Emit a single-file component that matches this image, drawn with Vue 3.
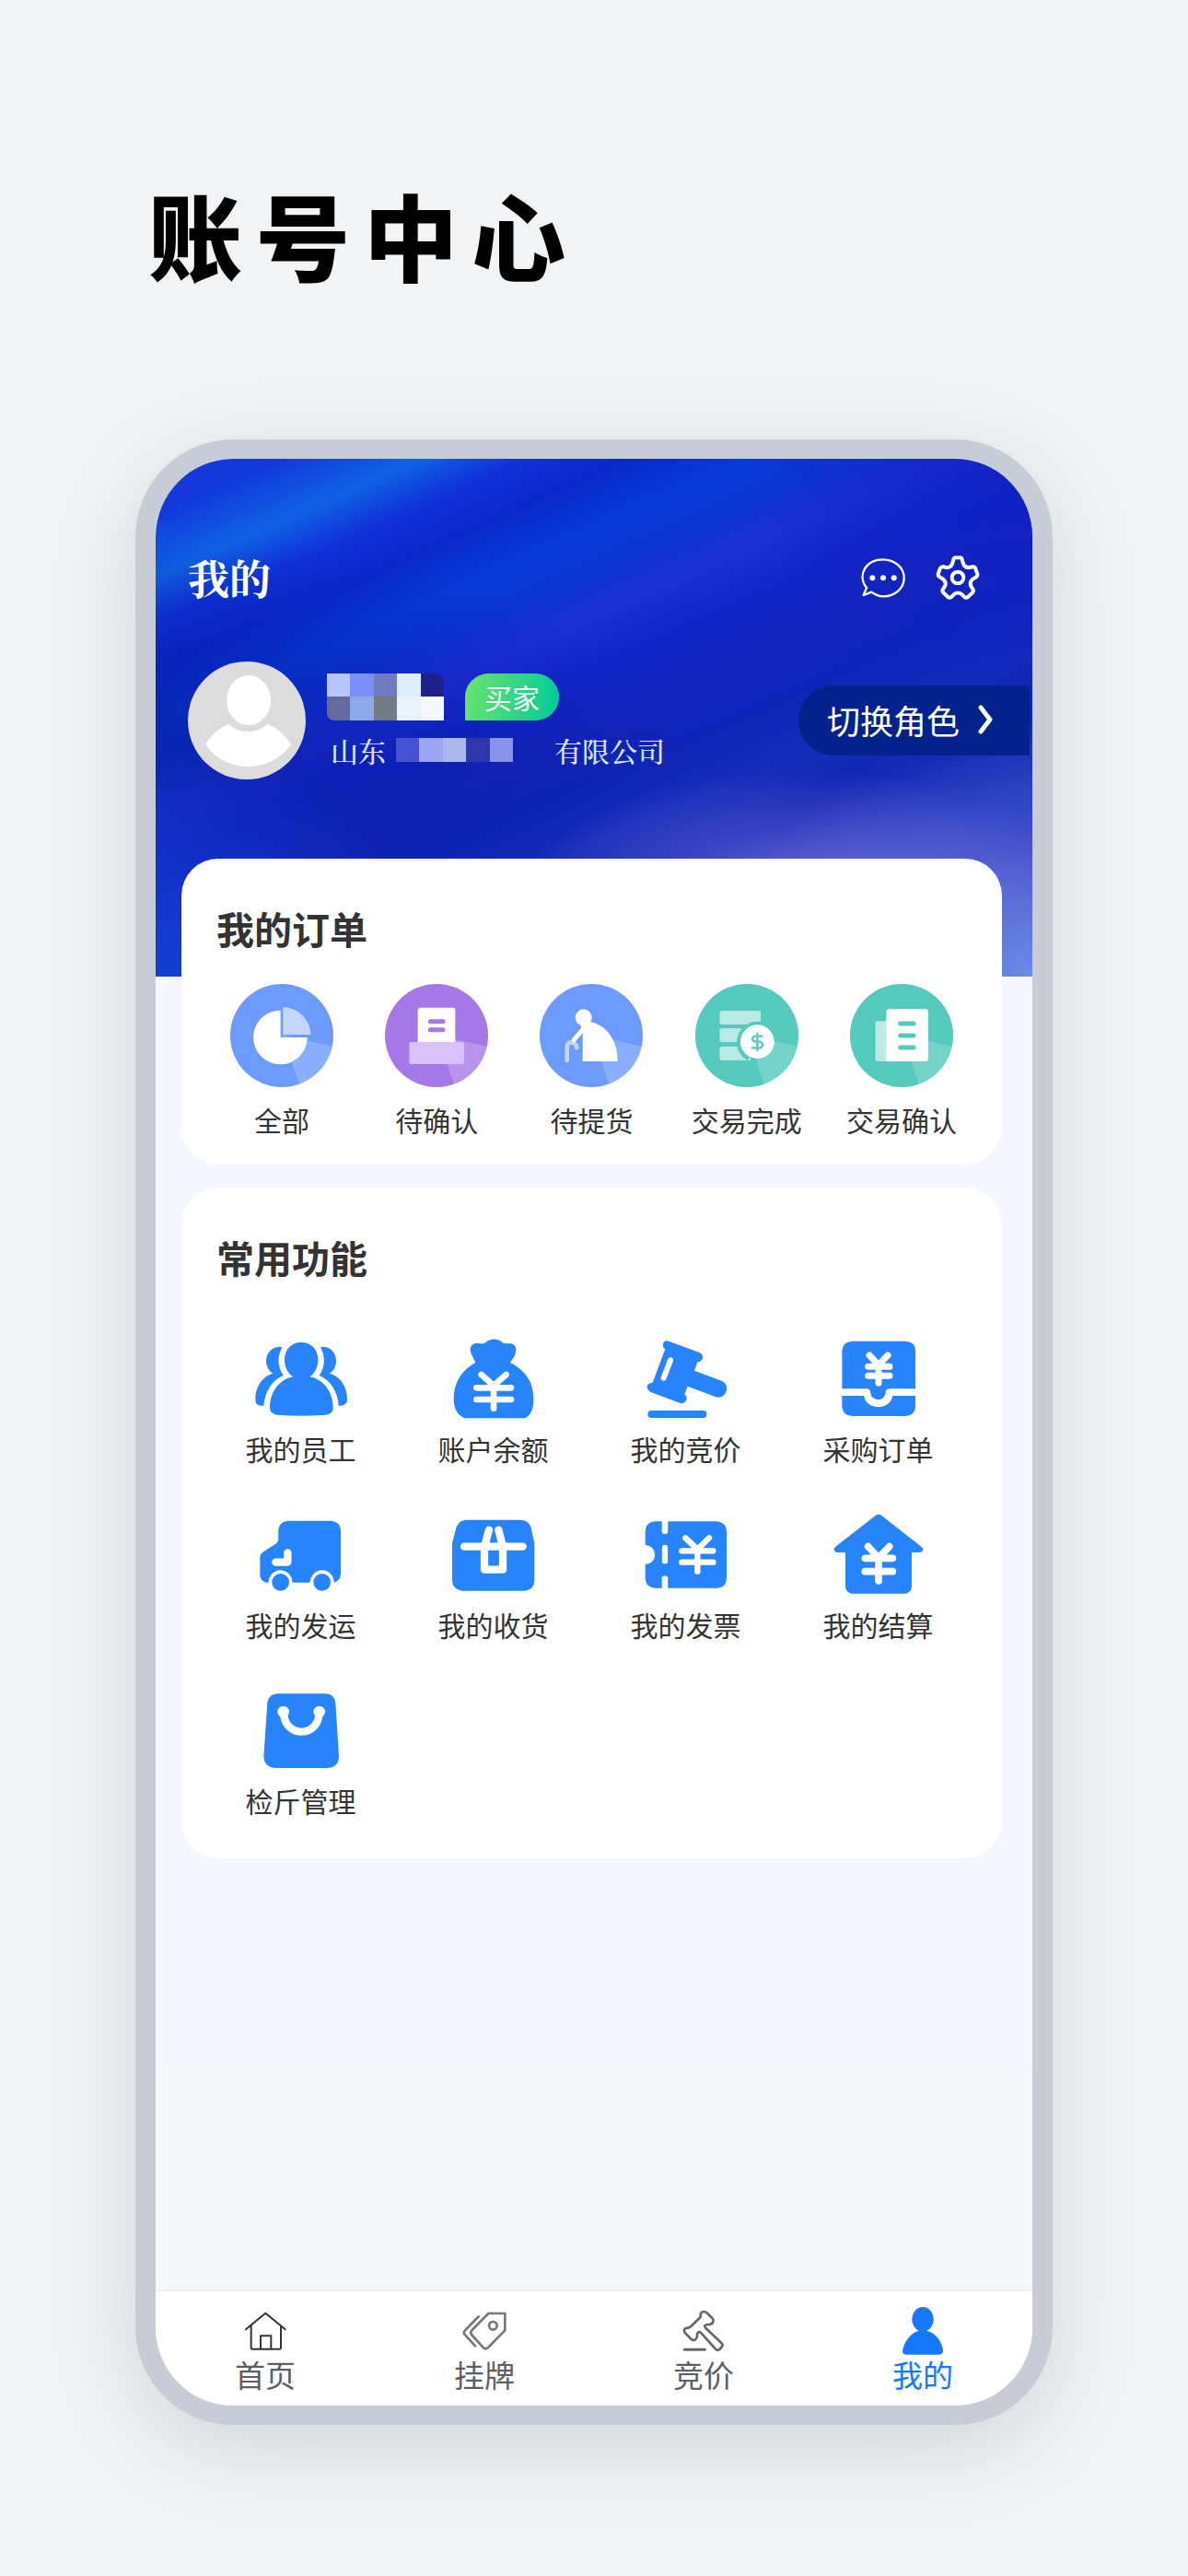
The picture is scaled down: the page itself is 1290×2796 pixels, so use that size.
<template>
  <div class="page">
    <h1 class="page-title">账号中心</h1>

    <div class="phone">
      <main class="content">
        <!-- Header -->
        <header class="hero">
          <div class="topbar">
            <h2 class="topbar-title">我的</h2>
            <button class="icon-btn" type="button" aria-label="消息">
              <svg viewBox="283 65 144 144" fill="none" stroke="#fff" stroke-width="7" stroke-linejoin="round">
                <path d="M291 194L301 170C285 150 284 126 296 106C309 85 333 78 355 78C393 78 423 105 423 138C423 172 393 198 355 198C341 198 328 191 317 184Z" />
                <g fill="#fff" stroke="none">
                  <circle cx="320" cy="138" r="9" />
                  <circle cx="355" cy="138" r="9" />
                  <circle cx="390" cy="138" r="9" />
                </g>
              </svg>
            </button>
            <button class="icon-btn" type="button" aria-label="设置">
              <svg viewBox="527 65 144 144" fill="none" stroke="#fff" stroke-width="12" stroke-linejoin="round">
                <path d="M592 72H606Q612 72 613 78L617 92Q622 105 636 104L648 101Q654 101 656 106L663 125Q664 131 660 134L649 141Q637 149 641 163L649 176Q651 182 647 186L631 201Q626 204 621 200L613 192Q599 181 586 192L578 200Q573 204 568 201L552 186Q548 182 550 176L558 163Q562 149 550 141L539 134Q534 131 535 125L542 106Q545 101 551 101L562 104Q577 105 581 92L585 78Q586 72 592 72Z" />
                <circle cx="599" cy="137" r="19" />
              </svg>
            </button>
          </div>

          <div class="user">
            <svg class="avatar" viewBox="0 0 128 128">
              <circle cx="64" cy="64" r="64" fill="#dcdcdc" />
              <ellipse cx="66" cy="42" rx="24" ry="27" fill="#fff" />
              <path d="M19 90C26 79 35 71 45 68C54 79 76 79 86 68C96 71 106 80 112 90C101 106 83 114 65 114C47 114 30 106 19 90Z" fill="#fff" />
            </svg>
            <div class="user-info">
              <div class="name-row">
                <div class="mosaic">
                  <span v-for="(c, i) in nameMosaic" :key="i" :style="{ background: c }"></span>
                </div>
                <span class="badge">买家</span>
              </div>
              <p class="company">
                <span>山东</span>
                <span class="mosaic company-mosaic">
                  <span v-for="(c, i) in companyMosaic" :key="i" :style="{ background: c }"></span>
                </span>
                <span>有限公司</span>
              </p>
            </div>
            <button class="switch-role" type="button">
              切换角色
              <svg viewBox="0 0 16 32" fill="none" stroke="#fff" stroke-width="5" stroke-linecap="round" stroke-linejoin="round">
                <path d="M3 3L13 16L3 29" />
              </svg>
            </button>
          </div>
        </header>

        <!-- Orders -->
        <section class="card orders">
          <h3 class="card-title">我的订单</h3>
          <div class="order-list">
            <a v-for="item in orders" :key="item.label" class="item" href="#">
              <svg class="order-icon" viewBox="0 0 336 336">
                <circle cx="168" cy="168" r="168" :fill="item.color" />
                <path d="M170 166L332 203A168 168 0 0 1 225 327Z" fill="#fff" opacity="0.2" />
                <path
                  v-for="(s, i) in item.shapes"
                  :key="i"
                  :d="s.d"
                  :fill="s.stroke ? 'none' : s.fill"
                  :stroke="s.stroke"
                  :stroke-width="s.width"
                  stroke-linecap="round"
                  stroke-linejoin="round"
                />
              </svg>
              <span class="label order-label">{{ item.label }}</span>
            </a>
          </div>
        </section>

        <!-- Common functions -->
        <section class="card functions">
          <h3 class="card-title">常用功能</h3>
          <div class="function-list">
            <a v-for="item in functions" :key="item.label" class="item" href="#">
              <svg class="function-icon" :viewBox="item.box">
                <path v-for="d in item.solid" :key="d" :d="d" fill="#2684ff" />
                <path v-if="item.base" :d="item.base" class="line" stroke="#2684ff" stroke-width="24" />
                <path v-if="item.dots" :d="item.dots" fill="#fff" />
                <path v-if="item.line" :d="item.line" class="line" stroke="#fff" :stroke-width="item.width" />
              </svg>
              <span class="label">{{ item.label }}</span>
            </a>
          </div>
        </section>
      </main>

      <!-- Tab bar -->
      <nav class="tabbar">
        <a class="tab" href="#">
          <svg viewBox="353 126 168 168" fill="none" stroke="#333" stroke-width="6" stroke-linecap="round" stroke-linejoin="round">
            <path d="M374 205L438 152L502 205M391 193V264Q391 269 396 269H483Q488 269 488 264V193M422 268V226H456V268" />
          </svg>
          首页
        </a>
        <a class="tab" href="#">
          <svg viewBox="1071 126 168 168" fill="none" stroke="#777" stroke-width="8" stroke-linecap="round" stroke-linejoin="round">
            <path d="M1168 153H1222V208L1166 265Q1159 271 1152 265L1113 222Q1108 215 1113 209ZM1136 163L1092 208Q1085 216 1092 223L1125 259" />
            <circle cx="1183" cy="193" r="13" />
          </svg>
          挂牌
        </a>
        <a class="tab" href="#">
          <svg viewBox="256 126 168 168" fill="none" stroke="#666" stroke-width="8" stroke-linecap="round" stroke-linejoin="round">
            <path d="M330 163C329 152 334 147 341 147Q346 147 350 151L368 168C375 176 371 188 358 189C344 188 341 194 347 201L398 249Q404 255 400 261L392 270Q386 275 380 270L333 218C326 210 318 214 319 224C320 238 309 244 300 237L281 218C273 208 277 200 289 200Q295 199 299 195L326 169Q330 166 330 163Z" />
            <path d="M278 271H344" stroke-width="9" />
          </svg>
          竞价
        </a>
        <a class="tab active" href="#" aria-current="page">
          <svg viewBox="972 126 168 168" fill="#1677ff">
            <ellipse cx="1056" cy="172" rx="35" ry="40" />
            <path d="M990 275C998 235 1025 212 1045 209H1067C1090 213 1115 235 1122 272Q1123 284 1112 287H1000Q990 285 990 275Z" />
          </svg>
          我的
        </a>
      </nav>
    </div>
  </div>
</template>

<script setup>
const nameMosaic = [
  "#bac4ff", "#7b8ff8", "#6f7dbe", "#deeeff", "#1f2088",
  "#66699e", "#8da8ec", "#727b82", "#e8f3ff", "#f5f7ff"
];
const companyMosaic = ["#4653d0", "#9ca5f6", "#abb7ea", "#2c38ac", "#8793e8"];

const orders = [
  {
    label: "全部",
    color: "#6c9aff",
    shapes: [
      { d: "M164 86A88 88 0 1 0 251 174H164Z", fill: "#fff" },
      { d: "M172 76A90 90 0 0 1 262 165H172Z", fill: "#c4d6fd" }
    ]
  },
  {
    label: "待确认",
    color: "#a678e7",
    shapes: [
      { d: "M115 77H221Q229 77 229 85V192H107V85Q107 77 115 77Z", fill: "#fff" },
      { d: "M148 122H189M148 149H189", stroke: "#a678e7", width: 15 },
      { d: "M86 189H251Q258 189 258 196V254Q258 261 251 261H86Q79 261 79 254V196Q79 189 86 189Z", fill: "#d9c0f9" }
    ]
  },
  {
    label: "待提货",
    color: "#6c9aff",
    shapes: [
      { d: "M89 249V206Q89 190 104 190Q118 191 121 208", stroke: "#c4d6fd", width: 14 },
      { d: "M116 109A27 27 0 1 1 170 109A27 27 0 1 1 116 109Z", fill: "#fff" },
      { d: "M146 142L112 181", stroke: "#fff", width: 15 },
      { d: "M130 130L166 124C222 134 255 192 254 252H140V150Z", fill: "#fff" }
    ]
  },
  {
    label: "交易完成",
    color: "#53cabd",
    shapes: [
      { d: "M87 87H205Q213 87 213 95V132H87Q79 132 79 124V95Q79 87 87 87ZM87 144H160V189H87Q79 189 79 181V152Q79 144 87 144ZM87 204H180V249H87Q79 249 79 241V212Q79 204 87 204Z", fill: "#bae9e3" },
      { d: "M135 188A67 67 0 0 1 213 123V188L170 249A67 67 0 0 1 135 188Z", fill: "#53cabd" },
      { d: "M147 188A55 55 0 1 1 257 188A55 55 0 1 1 147 188Z", fill: "#fff" },
      { d: "M217 170H195A9 9 0 0 0 195 188H209A10 10 0 0 1 209 208H185M202 161V216", stroke: "#53cabd", width: 7 }
    ]
  },
  {
    label: "交易确认",
    color: "#53cabd",
    shapes: [
      { d: "M90 121H130V252H90Q82 252 82 244V129Q82 121 90 121Z", fill: "#bae9e3" },
      { d: "M126 82H247Q255 82 255 90V244Q255 252 247 252H118V90Q118 82 126 82Z", fill: "#fff" },
      { d: "M164 129H207M164 168H207M164 207H207", stroke: "#53cabd", width: 15 }
    ]
  }
];

const functions = [
  {
    label: "我的员工",
    box: "254 495 312 312",
    solid: [
      "M356 588C356 553 380 531 410 531C441 531 465 553 465 588C465 612 454 632 439 643C485 652 514 695 514 745Q514 765 490 767Q410 773 332 767Q308 765 308 745C308 695 337 652 383 643C367 632 356 612 356 588Z",
      "M348 547C320 540 296 562 296 592C296 610 306 626 319 632C285 640 261 675 261 715Q259 737 280 737H288C292 690 315 655 352 638C332 612 332 575 348 547Z",
      "M473 547C501 540 524 562 524 592C524 610 515 626 502 632C536 640 560 675 560 715Q562 735 541 737H532C529 690 506 655 469 638C489 612 489 575 473 547Z"
    ]
  },
  {
    label: "账户余额",
    box: "880 495 312 312",
    solid: [
      "M977 597L963 568C954 545 966 533 985 534C995 535 1003 537 1010 532C1026 517 1048 517 1065 532C1072 537 1082 533 1092 535C1108 539 1111 552 1108 562C1105 575 1098 587 1090 597C1145 625 1166 665 1166 715C1166 748 1158 768 1138 778H943C916 768 906 745 906 715C906 660 935 620 977 597Z"
    ],
    line: "M996 636L1036 672L1077 636M980 679H1093M980 717H1093M1036 672V746",
    width: 20
  },
  {
    label: "我的竞价",
    box: "157 45 312 312",
    solid: [
      "M256 77L358 115Q370 122 366 134Q361 145 350 145L340 173L430 207Q450 217 444 240Q434 265 410 259L318 224L308 250Q318 258 314 268Q308 282 294 279L196 242Q182 232 187 221Q191 213 204 212L245 103Q235 97 238 86Q243 73 256 77Z"
    ],
    base: "M200 315H368",
    line: "M262 139L240 197",
    width: 18
  },
  {
    label: "采购订单",
    box: "782 45 312 312",
    solid: [
      "M852 77H1026Q1058 79 1058 109V232H972Q961 233 961 245Q956 267 937 268Q914 266 912 247Q911 233 902 232H819V109Q821 79 852 77Z",
      "M819 255H890Q898 290 937 292Q976 290 984 255H1058V290Q1056 319 1026 321H852Q821 319 819 290Z"
    ],
    line: "M908 123L938 155L968 123M904 160H974M904 190H974M938 155V214",
    width: 21
  },
  {
    label: "我的发运",
    box: "134 48 312 312",
    solid: [
      "M247 92H388Q417 94 419 124V265Q418 287 398 293C394 265 378 253 358 253C338 253 322 268 318 293H262C260 268 242 253 223 253C200 253 186 270 183 293H178Q158 290 156 270V210Q157 200 165 194L206 168Q216 162 216 150V124Q217 95 247 92Z",
      "M195 292A28 28 0 1 1 251 292A28 28 0 1 1 195 292Z",
      "M330 292A28 28 0 1 1 386 292A28 28 0 1 1 330 292Z"
    ],
    line: "M246 196V227H207",
    width: 25
  },
  {
    label: "我的收货",
    box: "762 48 312 312",
    solid: [
      "M828 89H1008Q1032 91 1039 112L1051 165V288Q1050 315 1022 320H815Q785 316 783 288V165L797 112Q805 91 828 89Z"
    ],
    line: "M822 176H1013M903 122L888 176V251H948V176L934 122",
    width: 25
  },
  {
    label: "我的发票",
    box: "157 618 312 312",
    solid: [
      "M212 664H234V695A10 10 0 0 0 254 695V664H414Q444 668 445 697V850Q444 880 414 881H254V851A10 10 0 0 0 234 851V881H212Q182 879 180 850V804A31 31 0 0 0 180 741V697Q182 667 212 664Z"
    ],
    line: "M311 718L350 755L388 718M299 760H401M299 797H401M350 755V827M244 750V793",
    width: 19
  },
  {
    label: "我的结算",
    box: "782 618 312 312",
    solid: [
      "M928 645Q938 638 948 645L1078 747Q1085 753 1082 760Q1079 765 1072 765H1046V877Q1044 897 1026 899H850Q832 897 830 877V765H803Q793 763 793 754Q793 750 798 746Z"
    ],
    line: "M904 746L938 783L973 746M894 784H984M894 827H984M938 783V858",
    width: 23
  },
  {
    label: "检斤管理",
    box: "134 621 312 312",
    solid: [
      "M213 655H370Q398 657 402 684L413 860Q412 893 378 897H205Q170 893 168 860L180 684Q184 657 213 655Z"
    ],
    dots: "M213 714A19 19 0 1 1 251 714A19 19 0 1 1 213 714ZM330 714A19 19 0 1 1 368 714A19 19 0 1 1 330 714Z",
    line: "M234 725C242 797 340 797 348 725",
    width: 25
  }
];
</script>

<style>
body {
  margin: 0;
  background: #f1f3f5;
}
</style>

<style scoped>
.page {
  box-sizing: border-box;
  display: flex;
  flex-direction: column;
  min-height: 100vh;
  padding: 194px 147px 164px;
  background: #f1f3f5;
  color: #333;
  font-family: "Noto Sans CJK SC", sans-serif;
}

h1,
h2,
h3,
p {
  margin: 0;
}

a {
  color: inherit;
  text-decoration: none;
}

button {
  padding: 0;
  border: 0;
  background: none;
  color: #fff;
  font: inherit;
}

svg {
  display: block;
}

.page-title {
  margin: 0 0 163px 14px;
  color: #000;
  font-size: 102px;
  font-weight: 900;
  letter-spacing: 15px;
  line-height: 120px;
}

.phone {
  display: flex;
  flex: 1;
  flex-direction: column;
  overflow: hidden;
  border: 21px solid #c8cdd5;
  border-width: 21px 22px;
  border-radius: 106px;
  background: #f5f6fa;
  box-shadow: 0 24px 100px rgba(0, 0, 0, 0.13);
}

.content {
  padding-bottom: 230px;
  background: #f4f7ff;
}

/* Header */
.hero {
  box-sizing: border-box;
  min-height: 562px;
  padding: 99px 0 128px 35px;
  background:
    radial-gradient(ellipse 32% 24% at 74% 84%, rgba(134, 126, 224, 0.7), transparent),
    radial-gradient(ellipse 34% 50% at 100% 100%, #6a8ee6, rgba(86, 98, 212, 0.6) 50%, transparent),
    radial-gradient(ellipse 30% 46% at 0% 100%, rgba(20, 66, 214, 0.9), transparent),
    radial-gradient(ellipse 60% 40% at 0% 56%, rgba(5, 24, 150, 0.6), transparent),
    radial-gradient(ellipse 30% 50% at 100% 10%, rgba(16, 32, 196, 0.8), transparent),
    linear-gradient(156deg, #1a38de 0%, #1238dc 6%, #0f62e2 13%, #1032da 18%, #0a28cc 23%, #063ad8 29%, #0c34d4 34%, #1c2ed6 39%, #1024c6 45%, #1424bc 51%, #0e24b8 57%, #162cba 64%, #1024b2 71%, #1832bc 80%, #3040c4 100%);
}

.topbar {
  display: flex;
  align-items: center;
  gap: 33px;
  height: 60px;
  padding-right: 57px;
  margin-bottom: 61px;
}

.topbar-title {
  flex: 1;
  color: #fff;
  font-family: "Noto Serif CJK SC", "Noto Sans CJK SC", serif;
  font-size: 45px;
  font-weight: 700;
  line-height: 60px;
}

.icon-btn {
  width: 48px;
  height: 48px;
}

.user {
  display: flex;
  align-items: center;
}

.avatar {
  width: 128px;
  height: 128px;
  margin-right: 23px;
}

.name-row {
  display: flex;
  gap: 23px;
  margin-bottom: 12px;
}

.mosaic {
  display: grid;
  grid-template-columns: repeat(5, 1fr);
  width: 127px;
  height: 51px;
  overflow: hidden;
  border-radius: 0 12px 0 8px;
}

.badge {
  padding: 0 21px;
  border-radius: 26px 26px 26px 0;
  background: linear-gradient(100deg, #6be36a, #00cb9b);
  color: #fff;
  font-size: 30px;
  line-height: 50px;
}

.company {
  display: flex;
  align-items: center;
  padding-left: 4px;
  color: #dfe3fa;
  font-family: "Noto Serif CJK SC", "Noto Sans CJK SC", serif;
  font-size: 30px;
  font-weight: 500;
  line-height: 40px;
}

.company-mosaic {
  height: 26px;
  margin: 0 45px 0 11px;
  border-radius: 0;
}

.switch-role {
  display: flex;
  align-items: center;
  gap: 20px;
  height: 76px;
  padding: 0 40px 2px 31px;
  margin: 0 3px 0 auto;
  border-radius: 38px 0 0 38px;
  background: #04228b;
  font-size: 36px;
}

.switch-role svg {
  width: 16px;
  height: 32px;
}

/* Cards */
.card {
  padding: 45px 25px 0;
  margin: 0 33px 25px 28px;
  border-radius: 40px;
  background: #fff;
}

.card:last-child {
  margin-bottom: 0;
}

.card-title {
  padding-left: 13px;
  font-size: 41px;
  font-weight: 700;
  line-height: 60px;
}

.item {
  display: flex;
  flex-direction: column;
  align-items: center;
}

.label {
  font-size: 30px;
  line-height: 42px;
  white-space: nowrap;
}

.orders {
  padding-bottom: 28px;
  margin-top: -128px;
}

.order-list {
  display: grid;
  grid-template-columns: repeat(5, 1fr);
  margin-top: 31px;
}

.order-icon {
  width: 112px;
  height: 112px;
}

.order-label {
  margin-top: 14px;
}

.functions {
  padding: 45px 30px 42px 25px;
}

.function-list {
  display: grid;
  grid-template-columns: repeat(4, 1fr);
  row-gap: 43px;
  margin-top: 51px;
}

.function-icon {
  width: 104px;
  height: 104px;
  margin-bottom: 2px;
}

.line {
  fill: none;
  stroke-linecap: round;
  stroke-linejoin: round;
}

/* Tab bar */
.tabbar {
  display: flex;
  padding: 15px 0 14px;
  margin-top: auto;
  border-top: 1px solid #ececee;
  background: #fff;
}

.tab {
  display: flex;
  flex: 1;
  flex-direction: column;
  align-items: center;
  color: #5c5e63;
  font-size: 33px;
  line-height: 39px;
}

.tab svg {
  width: 56px;
  height: 56px;
}

.active {
  color: #1677ff;
}
</style>
